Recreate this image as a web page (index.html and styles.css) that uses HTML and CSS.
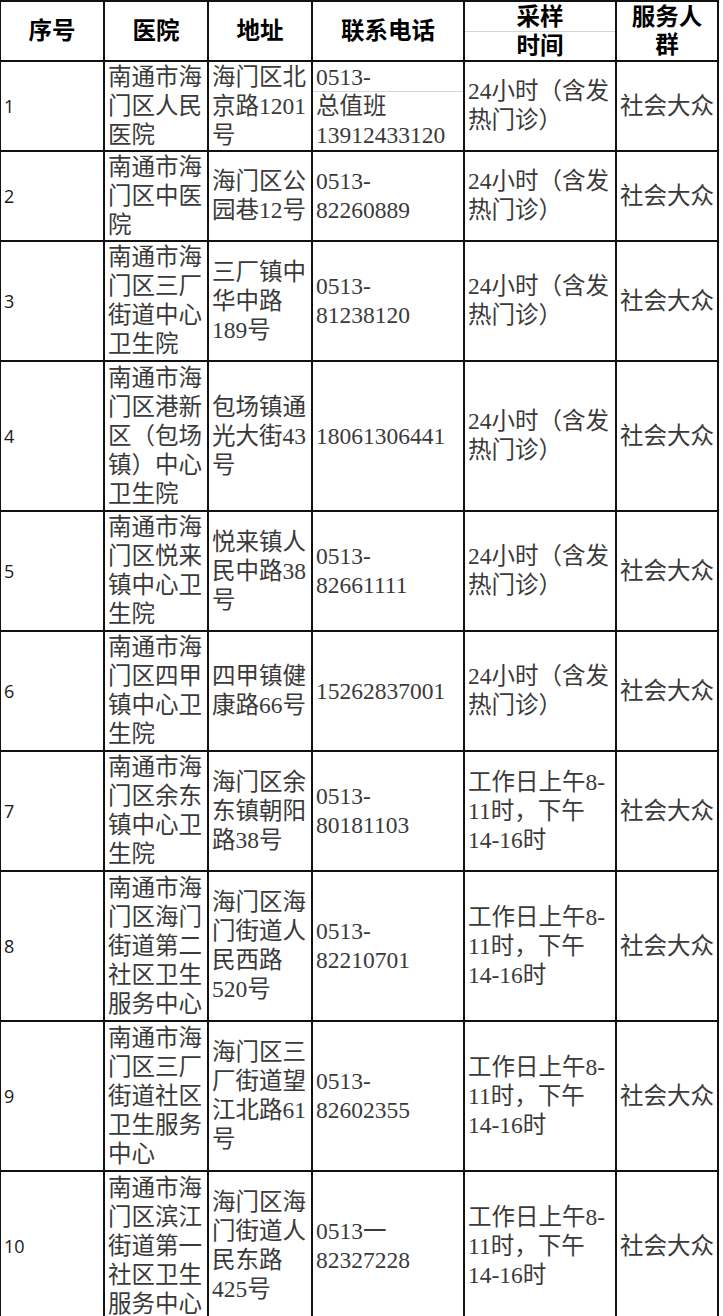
FILE: index.html
```html
<!DOCTYPE html>
<html lang="zh-CN">
<head>
<meta charset="utf-8">
<title>海门区核酸采样点</title>
<link rel="stylesheet" href="styles.css">
</head>
<body>
<table class="sites">
  <colgroup>
    <col class="c-no">
    <col class="c-hosp">
    <col class="c-addr">
    <col class="c-tel">
    <col class="c-time">
    <col class="c-crowd">
  </colgroup>
  <thead>
    <tr class="h2">
      <th>序号</th>
      <th>医院</th>
      <th>地址</th>
      <th>联系电话</th>
      <th><span class="sub">采样</span>时间</th>
      <th>服务人<br>群</th>
    </tr>
  </thead>
  <tbody>
    <tr class="h3">
      <td class="no">1</td>
      <td>南通市海<br>门区人民<br>医院</td>
      <td>海门区北<br>京路1201<br>号</td>
      <td><span class="sub">0513-</span>总值班<br>13912433120</td>
      <td>24小时（含发<br>热门诊）</td>
      <td>社会大众</td>
    </tr>
    <tr class="h3">
      <td class="no">2</td>
      <td>南通市海<br>门区中医<br>院</td>
      <td>海门区公<br>园巷12号</td>
      <td>0513-<br>82260889</td>
      <td>24小时（含发<br>热门诊）</td>
      <td>社会大众</td>
    </tr>
    <tr class="h4">
      <td class="no">3</td>
      <td>南通市海<br>门区三厂<br>街道中心<br>卫生院</td>
      <td>三厂镇中<br>华中路<br>189号</td>
      <td>0513-<br>81238120</td>
      <td>24小时（含发<br>热门诊）</td>
      <td>社会大众</td>
    </tr>
    <tr class="h5">
      <td class="no">4</td>
      <td>南通市海<br>门区港新<br>区（包场<br>镇）中心<br>卫生院</td>
      <td>包场镇通<br>光大街43<br>号</td>
      <td>18061306441</td>
      <td>24小时（含发<br>热门诊）</td>
      <td>社会大众</td>
    </tr>
    <tr class="h4">
      <td class="no">5</td>
      <td>南通市海<br>门区悦来<br>镇中心卫<br>生院</td>
      <td>悦来镇人<br>民中路38<br>号</td>
      <td>0513-<br>82661111</td>
      <td>24小时（含发<br>热门诊）</td>
      <td>社会大众</td>
    </tr>
    <tr class="h4">
      <td class="no">6</td>
      <td>南通市海<br>门区四甲<br>镇中心卫<br>生院</td>
      <td>四甲镇健<br>康路66号</td>
      <td>15262837001</td>
      <td>24小时（含发<br>热门诊）</td>
      <td>社会大众</td>
    </tr>
    <tr class="h4">
      <td class="no">7</td>
      <td>南通市海<br>门区余东<br>镇中心卫<br>生院</td>
      <td>海门区余<br>东镇朝阳<br>路38号</td>
      <td>0513-<br>80181103</td>
      <td>工作日上午8-<br>11时，下午<br>14-16时</td>
      <td>社会大众</td>
    </tr>
    <tr class="h5">
      <td class="no">8</td>
      <td>南通市海<br>门区海门<br>街道第二<br>社区卫生<br>服务中心</td>
      <td>海门区海<br>门街道人<br>民西路<br>520号</td>
      <td>0513-<br>82210701</td>
      <td>工作日上午8-<br>11时，下午<br>14-16时</td>
      <td>社会大众</td>
    </tr>
    <tr class="h5">
      <td class="no">9</td>
      <td>南通市海<br>门区三厂<br>街道社区<br>卫生服务<br>中心</td>
      <td>海门区三<br>厂街道望<br>江北路61<br>号</td>
      <td>0513-<br>82602355</td>
      <td>工作日上午8-<br>11时，下午<br>14-16时</td>
      <td>社会大众</td>
    </tr>
    <tr class="h5">
      <td class="no">10</td>
      <td>南通市海<br>门区滨江<br>街道第一<br>社区卫生<br>服务中心</td>
      <td>海门区海<br>门街道人<br>民东路<br>425号</td>
      <td>0513一<br>82327228</td>
      <td>工作日上午8-<br>11时，下午<br>14-16时</td>
      <td>社会大众</td>
    </tr>
  </tbody>
</table>
</body>
</html>
```

FILE: styles.css
```css
html, body {
  margin: 0;
  padding: 0;
  background: #ffffff;
}

.sites {
  margin-left: -1px;
  border-collapse: collapse;
  table-layout: fixed;
  width: 718px;
  font-family: "Liberation Serif", "Noto Sans CJK SC", serif;
  font-size: 23.5px;
  line-height: 29px;
  color: #3a3a3a;
}

.c-no { width: 104px; }
.c-hosp { width: 104px; }
.c-addr { width: 104px; }
.c-tel { width: 152px; }
.c-time { width: 152px; }
.c-crowd { width: 102px; }

.sites th,
.sites td {
  border: 2px solid #111111;
  padding: 0 0 0 3px;
  vertical-align: middle;
  text-align: left;
  white-space: nowrap;
  overflow: hidden;
}

.sites th {
  padding: 0;
  text-align: center;
  font-weight: 700;
  color: #000000;
  line-height: 28px;
}

.h2 { height: 60px; }
.h3 { height: 90px; }
.h4 { height: 120px; }
.h5 { height: 150px; }

.sites td.no {
  font-family: "Open Sans", "Liberation Sans", sans-serif;
  font-size: 18px;
  color: #1a1a1a;
}

.sub {
  display: block;
  line-height: 28px;
  border-bottom: 1px solid #d6d6d6;
}

.sites td .sub {
  margin-left: -3px;
  padding-left: 3px;
}
```
